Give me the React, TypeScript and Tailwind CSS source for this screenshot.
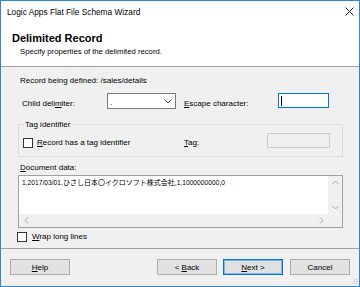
import React from "react";

function Chevron({ d, className }: { d: string; className?: string }) {
  return (
    <svg width="7" height="7" viewBox="0 0 7 7" className={className}>
      <path d={d} stroke="#a6a6a6" strokeWidth="1" fill="none" />
    </svg>
  );
}

export default function App() {
  return (
    <div className="relative w-[360px] h-[287px] border border-[#2b88d8] bg-[#f0f0f0] flex flex-col text-black [font-family:Liberation_Sans,Noto_Sans_CJK_JP,sans-serif] overflow-hidden">
      {/* title bar */}
      <div className="h-[23px] shrink-0 bg-white flex items-center justify-between pl-[6px] pr-[5px]">
        <span className="text-[8.3px] leading-[11px]">Logic Apps Flat File Schema Wizard</span>
        <svg width="9" height="9" viewBox="0 0 9 9" className="-mt-[3px]">
          <path d="M0.5 0.5 L8.5 8.5 M8.5 0.5 L0.5 8.5" stroke="#2a2a2a" strokeWidth="1" />
        </svg>
      </div>

      {/* header */}
      <div className="h-[43px] shrink-0 bg-white border-b border-[#a0a0a0] flex flex-col">
        <div className="mt-[7px] ml-[11px] text-[11px] leading-[14px] font-bold">Delimited Record</div>
        <div className="mt-[1px] ml-[19px] text-[7.7px] leading-[11px]">Specify properties of the delimited record.</div>
      </div>

      {/* body */}
      <div className="flex flex-col flex-1">
        <div className="mt-[8px] ml-[19px] text-[8px] leading-[11px]">Record being defined: /sales/details</div>

        <div className="mt-[7px] flex items-start h-[16px]">
          <div className="ml-[21px] w-[85px] pt-[5px] text-[8px] leading-[11px]">
            Child deli<u className="underline-offset-[1px]">m</u>iter:
          </div>
          <div className="w-[69px] h-[16px] border border-[#7a7a7a] bg-white flex items-center justify-between pl-[2px] pr-[3px]">
            <span className="text-[8px] leading-[11px] mt-[2px]">.</span>
            <svg width="8" height="5" viewBox="0 0 8 5">
              <path d="M0.5 0.5 L4 4 L7.5 0.5" stroke="#444" strokeWidth="1" fill="none" />
            </svg>
          </div>
          <div className="ml-[8px] w-[94px] pt-[5px] text-[8px] leading-[11px]">
            <u className="underline-offset-[1px]">E</u>scape character:
          </div>
          <div className="w-[51px] h-[15px] border border-[#0078d7] bg-white flex items-center pl-[2px]">
            <div className="w-[1px] h-[10px] bg-black" />
          </div>
        </div>

        <fieldset className="mt-[10px] ml-[17px] w-[325px] border border-[#dcdcdc] pt-[3px] pb-[8px]">
          <legend className="ml-[5px] px-[1px] text-[8px] leading-[11px]">Tag identifier</legend>
          <div className="flex items-start h-[15px]">
            <div className="ml-[4px] w-[161px] flex items-start">
              <div className="mt-[5px] w-[10px] h-[10px] border border-[#333] bg-white shrink-0" />
              <div className="ml-[4px] mt-[4px] text-[8px] leading-[11px]">
                <u className="underline-offset-[1px]">R</u>ecord has a tag identifier
              </div>
            </div>
            <div className="w-[83px] pt-[4px] text-[8px] leading-[11px]">
              <u className="underline-offset-[1px]">T</u>ag:
            </div>
            <div className="w-[63px] h-[15px] border border-[#cccccc] bg-[#f0f0f0]" />
          </div>
        </fieldset>

        <div className="mt-[5px] ml-[19px] text-[8px] leading-[11px]">
          <u className="underline-offset-[1px]">D</u>ocument data:
        </div>

        <div className="mt-[2px] ml-[17px] w-[325px] h-[53px] border border-[#a0a0a0] flex flex-col">
          <div className="flex flex-1">
            <div className="flex-1 bg-white pl-[3px] pt-[1px] text-[6.7px] leading-[11px] whitespace-nowrap overflow-hidden">
              1,2017/03/01,<span className="text-[7px] [font-family:Noto_Sans_CJK_JP,sans-serif]">ひさし日本〇イクロソフト株式会社</span>,1,1000000000,0
            </div>
            <div className="w-[14px] bg-[#f0f0f0] flex flex-col items-center justify-between pt-[3px] pb-[3px]">
              <Chevron d="M0.5 5 L3.5 2 L6.5 5" />
              <Chevron d="M0.5 2 L3.5 5 L6.5 2" />
            </div>
          </div>
          <div className="h-[13px] flex">
            <div className="flex-1 bg-[#f0f0f0] flex items-center justify-between pl-[4px] pr-[3px]">
              <Chevron d="M5 0.5 L2 3.5 L5 6.5" />
              <Chevron d="M2 0.5 L5 3.5 L2 6.5" />
            </div>
            <div className="w-[14px] bg-[#f0f0f0]" />
          </div>
        </div>

        <div className="mt-[4px] ml-[16px] flex items-start">
          <div className="w-[10px] h-[10px] border border-[#333] bg-white shrink-0" />
          <div className="ml-[5px] -mt-[1px] text-[8px] leading-[11px]">
            <u className="underline-offset-[1px]">W</u>rap long lines
          </div>
        </div>

        <div className="mt-[6px] border-t border-[#a0a0a0]" />

        <div className="mt-[10px] flex items-start pr-[9px]">
          <button className="ml-[9px] w-[60px] h-[16px] bg-[#e1e1e1] border border-[#adadad] text-[8px] leading-[11px]">
            <u className="underline-offset-[1px]">H</u>elp
          </button>
          <div className="flex-1" />
          <button className="w-[60px] h-[16px] bg-[#e1e1e1] border border-[#adadad] text-[8px] leading-[11px]">
            &lt; <u className="underline-offset-[1px]">B</u>ack
          </button>
          <button className="ml-[6px] w-[60px] h-[16px] bg-[#e1e1e1] border border-[#0078d7] shadow-[inset_0_0_0_1px_#7fb6e6] text-[8px] leading-[11px]">
            <u className="underline-offset-[1px]">N</u>ext &gt;
          </button>
          <button className="ml-[7px] w-[60px] h-[16px] bg-[#e1e1e1] border border-[#adadad] text-[8px] leading-[11px]">
            Cancel
          </button>
        </div>
      </div>

      {/* resize grip */}
      <svg width="6" height="6" viewBox="0 0 6 6" className="absolute right-[1px] bottom-[1px]">
        <rect x="4" y="0" width="1" height="1" fill="#b5b5b5" />
        <rect x="2" y="2" width="1" height="1" fill="#b5b5b5" />
        <rect x="4" y="2" width="1" height="1" fill="#b5b5b5" />
        <rect x="0" y="4" width="1" height="1" fill="#b5b5b5" />
        <rect x="2" y="4" width="1" height="1" fill="#b5b5b5" />
        <rect x="4" y="4" width="1" height="1" fill="#b5b5b5" />
      </svg>
    </div>
  );
}
